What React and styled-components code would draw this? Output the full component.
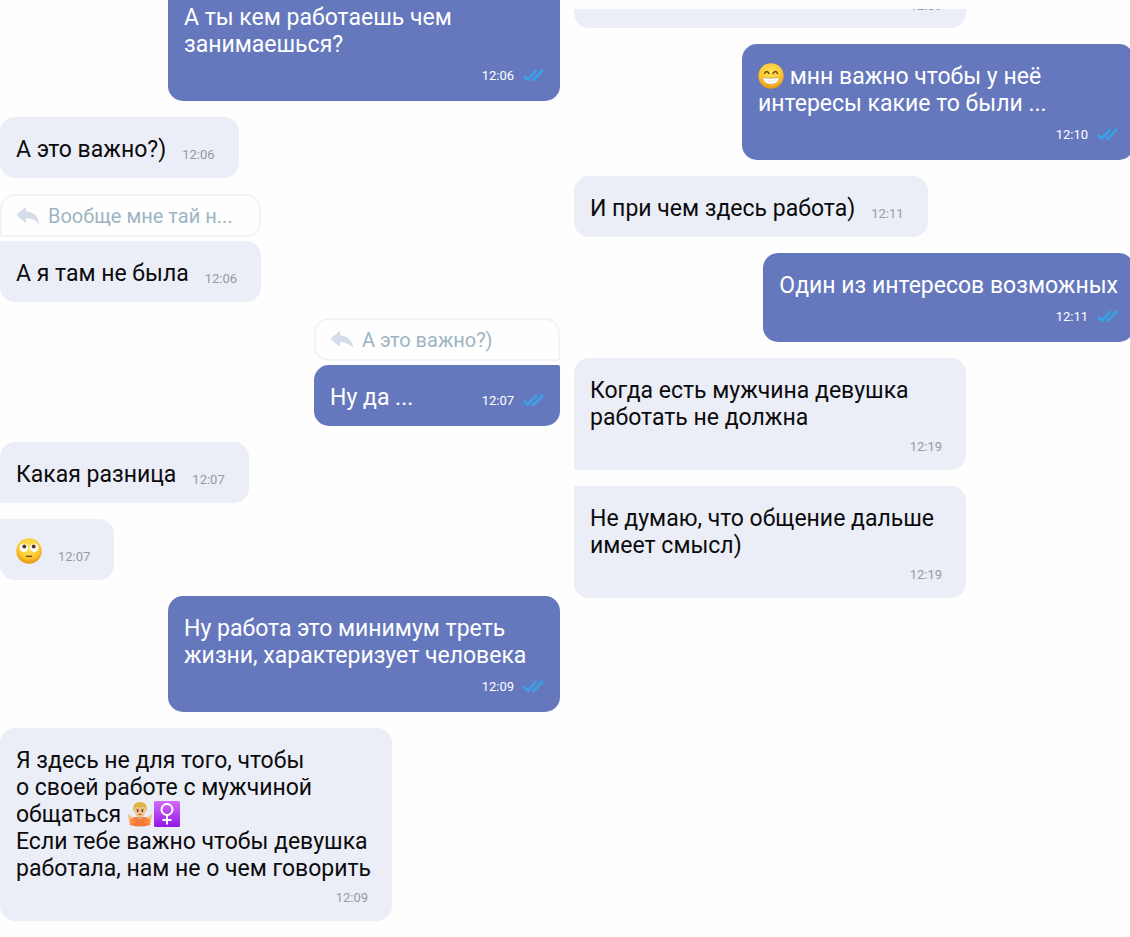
import React from 'react';
import styled, { createGlobalStyle } from 'styled-components';

const GlobalStyle = createGlobalStyle`
  * {
    box-sizing: border-box;
  }
  body {
    margin: 0;
    background: #fefefe;
    font-family: Roboto, 'Noto Sans', sans-serif;
    overflow-x: hidden;
  }
`;

const Screens = styled.main`
  display: grid;
  grid-template-columns: 1fr 1fr;
  align-items: start;
  gap: 14px;
  margin-right: -4px;
`;

const Chat = styled.section`
  display: flex;
  flex-direction: column;
  gap: 16px;
  margin-top: ${(props) => props.$top}px;
`;

const Group = styled.div`
  display: flex;
  flex-direction: column;
  gap: 4px;
  align-self: ${(props) => (props.$mine ? 'flex-end' : 'flex-start')};
  width: ${(props) => (props.$wide ? '70%' : 'auto')};
  max-width: 70%;
  min-width: ${(props) => (props.$quoted ? '246px' : '0')};
`;

const Bubble = styled.div`
  display: flex;
  flex-direction: ${(props) => (props.$stacked ? 'column' : 'row')};
  justify-content: space-between;
  align-items: ${(props) => (props.$stacked ? 'stretch' : 'flex-end')};
  gap: ${(props) => (props.$stacked ? '8px' : '16px')};
  padding: ${(props) => (props.$mine ? '19px 16px 15px' : '19px 24px 15px 16px')};
  border-radius: ${(props) => props.$corners || '15px'};
  background: ${(props) => (props.$mine ? '#6678bd' : '#ebeef6')};
  color: ${(props) => (props.$mine ? '#fff' : '#0b0b0d')};
`;

const Text = styled.p`
  margin: 0;
  font-size: 23px;
  line-height: 27px;
  white-space: pre;
`;

const Meta = styled.div`
  display: flex;
  align-items: center;
  justify-content: flex-end;
  gap: 9px;
  margin: ${(props) => (props.$mine ? '2px 0' : '0')};
  font-size: 13px;
  line-height: 16px;
  color: ${(props) => (props.$mine ? '#fff' : '#969aa4')};
`;

const Quote = styled.div`
  display: flex;
  align-items: center;
  gap: 8px;
  height: 43px;
  padding: 0 14px;
  border: 2px solid #f1f3f8;
  border-radius: ${(props) => props.$corners};
  color: #9db4c3;
  font-size: 20px;
  line-height: 24px;
  white-space: nowrap;
`;

// end of the message that is scrolled under the top edge
const BubbleTail = styled.div`
  display: flex;
  align-items: flex-end;
  justify-content: flex-end;
  width: 70%;
  height: 19px;
  padding: 0 24px 14px 0;
  border-radius: 0 0 15px 15px;
  background: #ebeef6;
  overflow: hidden;
`;

const Emoji = styled.svg`
  width: 26px;
  height: 26px;
  margin-right: ${(props) => (props.$tight ? '1px' : '0')};
  vertical-align: -5px;
`;

const Ticks = () => (
  <svg width="21" height="14" viewBox="0 0 21 14" fill="none" stroke="#38a2e6" strokeWidth="2.6" aria-label="Прочитано">
    <path d="M.8 6.600 4.800 10.600 13.500 1" />
    <path d="M9 9.800l1.800 1L20 1" />
  </svg>
);

const ReplyArrow = () => (
  <svg width="24" height="18" viewBox="0 0 24 18" fill="#d5dcea" aria-hidden="true">
    <path d="M.5 8Q5 3.500 9.500.3q.6-.2.600.500V4.500C17.500 4.500 22.500 9.500 23.300 17.500 19.500 13 16 11.300 10.100 11.300V15q0 .8-.6.500Q5 12.500.5 8z" />
  </svg>
);

const FaceFill = ({ id }) => (
  <defs>
    <radialGradient id={id} cx=".5" cy=".35" r=".65">
      <stop offset="0" stopColor="#ffe65c" />
      <stop offset=".65" stopColor="#fdc92f" />
      <stop offset="1" stopColor="#e8920f" />
    </radialGradient>
  </defs>
);

const RollingEyes = () => (
  <Emoji viewBox="0 0 26 26" role="img" aria-label="🙄">
    <FaceFill id="rolling" />
    <circle cx="13" cy="13" r="12.7" fill="url(#rolling)" />
    <circle cx="7.800" cy="9.800" r="4.300" fill="#fff" />
    <circle cx="18.200" cy="9.800" r="4.300" fill="#fff" />
    <circle cx="8.300" cy="8.500" r="2" fill="#5d3a1c" />
    <circle cx="17.700" cy="8.500" r="2" fill="#5d3a1c" />
    <path d="M10.500 18.300h5" stroke="#6b3d10" strokeWidth="1.300" fill="none" strokeLinecap="round" />
  </Emoji>
);

const Grin = () => (
  <Emoji viewBox="0 0 26 26" role="img" aria-label="😁">
    <FaceFill id="grin" />
    <circle cx="13" cy="13" r="12.7" fill="url(#grin)" />
    <path d="M6.500 10.500q2-4 4.500 0M15 10.500q2.500-4 4.500 0" stroke="#7a4a14" strokeWidth="1.500" fill="none" strokeLinecap="round" />
    <path d="M4.500 14.500q8.500 1.500 17 0-.5 6.800-8.500 6.800t-8.500-6.800z" fill="#fff" stroke="#c08a35" strokeWidth=".6" />
    <path d="M5.500 17.500q7.500 1.500 15 0" stroke="#d8cbb8" strokeWidth=".5" fill="none" />
  </Emoji>
);

const Shrug = () => (
  <Emoji $tight viewBox="0 0 26 26" role="img" aria-label="🤷🏼">
    <path d="M3 24q-1.500-7 5-8h10q6.500 1 5 8-5 1.500-10 1.500T3 24z" fill="#f5793a" />
    <path d="M3 22 .5 15.500l1.500-2.500 3.500 3 .5 4zM23 22l2.500-6.500L24 13l-3.500 3-.5 4z" fill="#f1c58f" />
    <path d="M2.500 18.500 6.500 17l2.500 5-5 2.500zM23.500 18.500l-4-1.500-2.500 5 5 2.500z" fill="#fb8a3c" />
    <path d="M10.500 13h5v4.500q-2.500 1.500-5 0z" fill="#dda770" />
    <ellipse cx="13" cy="9.500" rx="5.600" ry="6.700" fill="#f0c48e" />
    <path d="M6.800 11Q4.500 1 13 1t6.200 10q-1-4.500-2.700-5.500-3.500 1.500-7 .5Q7.700 7.500 6.800 11z" fill="#dcb54a" />
    <path d="M9.500 8.400h2.200M14.300 8.400h2.200" stroke="#8b5a24" strokeWidth=".9" />
    <circle cx="10.700" cy="10" r=".9" fill="#4b2c14" />
    <circle cx="15.300" cy="10" r=".9" fill="#4b2c14" />
    <path d="M11.500 13.400h3" stroke="#b1512f" strokeWidth="1" />
  </Emoji>
);

const FemaleSign = () => (
  <Emoji viewBox="0 0 26 26" role="img" aria-label="♀️">
    <defs>
      <linearGradient id="female" x2="0" y2="1">
        <stop offset="0" stopColor="#d36cf5" />
        <stop offset="1" stopColor="#9416e8" />
      </linearGradient>
    </defs>
    <rect width="26" height="26" rx="1.500" fill="url(#female)" />
    <g stroke="#fff" strokeWidth="2" fill="none">
      <circle cx="13" cy="8.500" r="5.500" />
      <path d="M13 14v9.500M8.500 19h9" />
    </g>
  </Emoji>
);

const Message = ({
  mine, wide, stacked, time, quote, quoteCorners, corners, children,
}) => (
  <Group $mine={mine} $wide={wide} $quoted={Boolean(quote)}>
    {quote && (
      <Quote $corners={quoteCorners}>
        <ReplyArrow />
        <span>{quote}</span>
      </Quote>
    )}
    <Bubble $mine={mine} $stacked={wide || stacked} $corners={corners}>
      <Text>{children}</Text>
      <Meta $mine={mine}>
        <time>{time}</time>
        {mine && <Ticks />}
      </Meta>
    </Bubble>
  </Group>
);

const App = () => (
  <>
    <GlobalStyle />
    <Screens>
      <Chat $top={-15}>
        <Message mine wide time="12:06">{'А ты кем работаешь чем\nзанимаешься?'}</Message>
        <Message time="12:06">А это важно?)</Message>
        <Message
          time="12:06"
          quote="Вообще мне тай н..."
          quoteCorners="15px 15px 15px 2px"
          corners="2px 15px 15px 15px"
        >
          А я там не была
        </Message>
        <Message
          mine
          time="12:07"
          quote="А это важно?)"
          quoteCorners="15px 15px 2px 15px"
          corners="15px 2px 15px 15px"
        >
          Ну да ...
        </Message>
        <Message time="12:07" corners="15px 15px 15px 2px">Какая разница</Message>
        <Message time="12:07" corners="2px 15px 15px 15px"><RollingEyes /></Message>
        <Message mine wide time="12:09">{'Ну работа это минимум треть\nжизни, характеризует человека'}</Message>
        <Message wide time="12:09">
          {'Я здесь не для того, чтобы\nо своей работе с мужчиной\nобщаться '}
          <Shrug />
          <FemaleSign />
          {'\nЕсли тебе важно чтобы девушка\nработала, нам не о чем говорить'}
        </Message>
      </Chat>
      <Chat $top={9}>
        <BubbleTail>
          <Meta><time>12:09</time></Meta>
        </BubbleTail>
        <Message mine wide time="12:10">
          <Grin />
          {' мнн важно чтобы у неё\nинтересы какие то были ...'}
        </Message>
        <Message time="12:11">И при чем здесь работа)</Message>
        <Message mine stacked time="12:11">Один из интересов возможных</Message>
        <Message wide time="12:19" corners="15px 15px 15px 2px">{'Когда есть мужчина девушка\nработать не должна'}</Message>
        <Message wide time="12:19" corners="2px 15px 15px 15px">{'Не думаю, что общение дальше\nимеет смысл)'}</Message>
      </Chat>
    </Screens>
  </>
);

export default App;
